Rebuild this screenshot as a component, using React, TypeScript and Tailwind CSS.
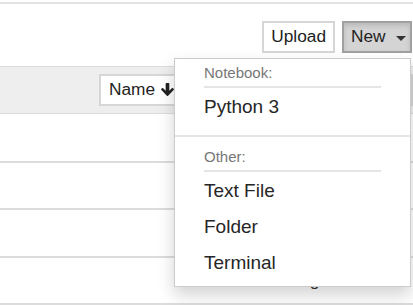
const MENU_ITEMS = ["Text File", "Folder", "Terminal"]

function ArrowDownIcon() {
  return (
    <svg viewBox="0 0 12 14" className="h-[15px] w-[13px]" fill="#222">
      <path d="M4.3 0.8 Q4.3 0 5.1 0 H6.9 Q7.7 0 7.7 0.8 V7.2 L10 4.9 Q10.6 4.3 11.2 4.9 L11.7 5.4 Q12.2 6 11.7 6.6 L6.6 11.8 Q6 12.4 5.4 11.8 L0.3 6.6 Q-0.2 6 0.3 5.4 L0.8 4.9 Q1.4 4.3 2 4.9 L4.3 7.2 Z" />
    </svg>
  )
}

function MenuHeader({ label }: { label: string }) {
  return (
    <>
      <div className="flex h-[20px] items-center pl-[29px] text-[15px] leading-none text-[#777]">
        {label}
      </div>
      <div className="ml-[29px] mt-[4px] h-[2px] w-[177px] bg-[#e5e5e5]" />
    </>
  )
}

function MenuItem({ label }: { label: string }) {
  return (
    <div className="flex h-[36px] items-center pl-[29px] text-[19px] leading-none text-[#262626]">
      {label}
    </div>
  )
}

export default function App() {
  return (
    <div
      className="relative h-[305px] w-[413px] overflow-hidden bg-white"
      style={{ fontFamily: '"Liberation Sans", Arial, sans-serif' }}
    >
      <div className="mt-[2px] h-[2px] bg-[#e3e3e3]" />

      {/* toolbar */}
      <div className="mt-[17px] flex justify-end gap-[7px] pr-[1px]">
        <button className="flex h-[32px] items-center border-2 border-[#d6d6d6] bg-white px-[7px] text-[17.3px] leading-none text-[#222]">
          Upload
        </button>
        <button className="flex h-[32px] w-[70px] items-center border-2 border-[#a0a0a0] bg-[#d4d4d4] pl-[7px] text-[17.3px] leading-none text-[#222] shadow-[inset_0_3px_5px_rgba(0,0,0,0.125)]">
          New
          <span className="ml-[10px] mt-[2px] h-0 w-0 border-x-[5px] border-t-[5px] border-x-transparent border-t-[#333]" />
        </button>
      </div>

      {/* list header */}
      <div className="mt-[13px] flex h-[48px] items-center border-y border-[#dcdcdc] bg-[#eee] pl-[99px]">
        <button className="flex h-[32px] w-[120px] items-center gap-[6px] border-2 border-[#d6d6d6] bg-white pl-[8px] text-[17.3px] leading-none text-[#222]">
          Name
          <ArrowDownIcon />
        </button>
        <div className="ml-auto h-[32px] w-[2px] border-l-2 border-[#d6d6d6]" />
      </div>

      {/* rows */}
      <div className="h-[49px] border-b-2 border-[#dcdcdc]" />
      <div className="h-[47px] border-b-2 border-[#dcdcdc]" />
      <div className="h-[48px] border-b-2 border-[#dcdcdc]" />
      <div className="flex h-[47px] items-center border-b-2 border-[#dcdcdc] pl-[255px] text-[17.3px] text-[#333]">
        Running
      </div>

      {/* New dropdown */}
      <div className="absolute left-[174px] top-[58px] w-[237px] border border-[#ccc] bg-white pb-[6px] pt-[3px] shadow-[0_8px_16px_rgba(0,0,0,0.175)]">
        <MenuHeader label="Notebook:" />
        <MenuItem label="Python 3" />
        <div className="mt-[11px] h-[2px] bg-[#e5e5e5]" />
        <div className="mt-[9px]">
          <MenuHeader label="Other:" />
        </div>
        {MENU_ITEMS.map((item) => (
          <MenuItem key={item} label={item} />
        ))}
      </div>
    </div>
  )
}
